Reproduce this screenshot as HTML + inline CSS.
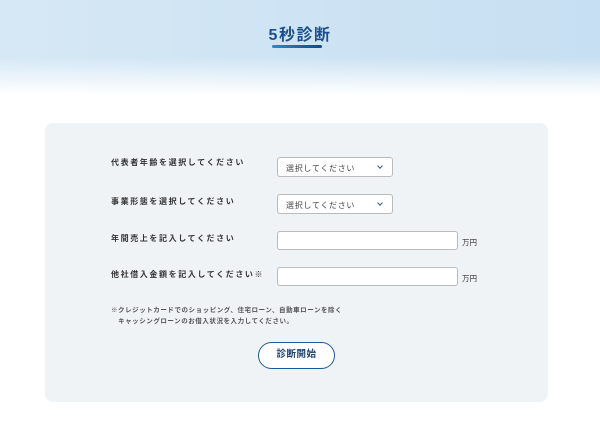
<!DOCTYPE html>
<html><head><meta charset="utf-8"><style>
*{margin:0;padding:0;box-sizing:border-box}
body{width:600px;height:440px;background:#fff;position:relative;overflow:hidden;font-family:"Liberation Sans","Noto Sans CJK JP",sans-serif}
.hdr{position:absolute;left:0;top:0;width:600px;height:95px;background:linear-gradient(to bottom,rgba(255,255,255,0) 0,rgba(255,255,255,0) 60%,#fff 100%),linear-gradient(to right,#d6e8f5,#c6dff2)}
.title{position:absolute;left:0;width:600px;top:21px;text-align:center;font-size:16px;font-weight:bold;color:#1a4f8f;letter-spacing:1.5px}
.ul{position:absolute;left:272px;top:45px;width:50px;height:3px;background:linear-gradient(to right,#2a8ad0,#12468a);border-radius:2px}
.panel{position:absolute;left:45px;top:123px;width:503px;height:279px;background:#f0f3f6;border-radius:8px}
.lb{position:absolute;left:111px;font-size:8px;font-weight:bold;color:#333;letter-spacing:1.6px}
.sel{position:absolute;left:277px;width:116px;height:20px;background:#fff;border:1px solid #bbb;border-radius:3px;font-size:8px;color:#444;padding:5px 0 0 8px;letter-spacing:0.7px}
.sel:after{content:"";position:absolute;right:10px;top:6px;width:3px;height:3px;border-right:1.3px solid #2a5a9a;border-bottom:1.3px solid #2a5a9a;transform:rotate(45deg)}
.in{position:absolute;left:277px;width:181px;height:19px;background:#fff;border:1px solid #bbb;border-radius:3px}
.u{position:absolute;left:462px;font-size:7.5px;color:#333}
.note{position:absolute;left:111px;top:305px;font-size:6.5px;color:#555;line-height:11px;font-weight:bold;letter-spacing:0.55px}
.btn{position:absolute;left:258px;top:342px;width:77px;height:27px;border:1.5px solid #1a5a9a;border-radius:14px;background:#fff;text-align:center;font-size:9.5px;font-weight:bold;color:#1a3f6f;line-height:24px;letter-spacing:0.5px}
</style></head><body>
<div class="hdr"></div>
<div class="title">5秒診断</div>
<div class="ul"></div>
<div class="panel"></div>
<div class="lb" style="top:157px">代表者年齢を選択してください</div>
<div class="sel" style="top:157px">選択してください</div>
<div class="lb" style="top:196px">事業形態を選択してください</div>
<div class="sel" style="top:194px">選択してください</div>
<div class="lb" style="top:233px">年間売上を記入してください</div>
<div class="in" style="top:231px"></div><div class="u" style="top:237px">万円</div>
<div class="lb" style="top:269px">他社借入金額を記入してください※</div>
<div class="in" style="top:267px"></div><div class="u" style="top:273px">万円</div>
<div class="note">※クレジットカードでのショッピング、住宅ローン、自動車ローンを除く<br>&nbsp;&nbsp;&nbsp;キャッシングローンのお借入状況を入力してください。</div>
<div class="btn">診断開始</div>
</body></html>
